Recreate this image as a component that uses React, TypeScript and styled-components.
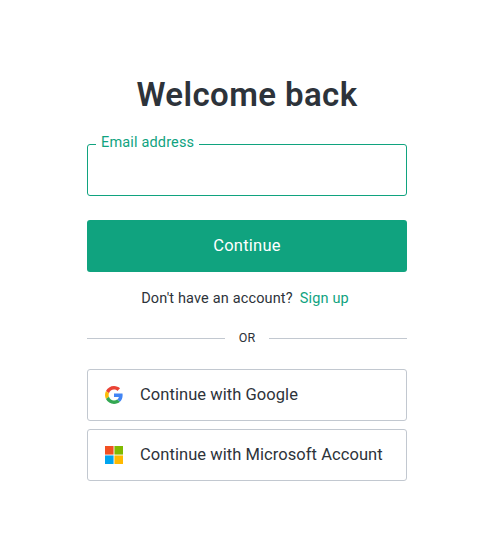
import React from "react";
import styled, { createGlobalStyle } from "styled-components";

const GlobalStyle = createGlobalStyle`
  *, *::before, *::after { box-sizing: border-box; }
  body { margin: 0; background: #fff; color: #2d333a; font-family: Roboto, "Liberation Sans", sans-serif; }
`;

const Page = styled.main`
  min-height: 555px;
  padding: 74px 79px 0 87px;
`;

const Title = styled.h1`
  margin: 0;
  font-size: 33px;
  line-height: 42px;
  font-weight: 600;
  letter-spacing: 0.4px;
  text-align: center;
  white-space: nowrap;
`;

const Field = styled.fieldset`
  height: 62px;
  margin: 18px 0 24px;
  padding: 0 8px;
  min-width: 0;
  border: 1px solid #10a37f;
  border-radius: 3px;
`;

const FieldLabel = styled.legend`
  height: 20px;
  padding: 0 4px 0 5px;
  width: 103px;
  color: #10a37f;
  font-size: 14.5px;
  line-height: 18px;
  letter-spacing: 0.16px;
  white-space: nowrap;
`;

const Input = styled.input`
  display: block;
  width: 100%;
  height: 36px;
  padding: 0 6px;
  border: 0;
  outline: 0;
  background: transparent;
  font: inherit;
`;

const PrimaryButton = styled.button`
  display: block;
  width: 100%;
  height: 52px;
  padding: 0;
  border: 0;
  border-radius: 3px;
  background: #10a37f;
  color: #fff;
  font: 400 16.5px/20px Roboto, sans-serif;
  letter-spacing: 0.25px;
`;

const SignUp = styled.p`
  margin: 16px 0 0;
  padding-right: 4px;
  font-size: 14.5px;
  line-height: 22px;
  letter-spacing: 0.15px;
  text-align: center;
  white-space: nowrap;
`;

const SignUpLink = styled.a`
  margin-left: 7px;
  color: #10a37f;
  text-decoration: none;
`;

const Divider = styled.div`
  display: grid;
  grid-template-columns: 138px 1fr 138px;
  align-items: center;
  height: 20px;
  margin: 18px 0 21px;
  font-size: 12.5px;
  line-height: 20px;
  text-align: center;

  &::before, &::after {
    content: "";
    height: 1px;
    background: #c2c8d0;
  }
`;

const Providers = styled.div`
  display: grid;
  gap: 8px;
`;

const ProviderButton = styled.button`
  display: flex;
  align-items: center;
  gap: 17px;
  height: 52px;
  padding: 0 17px;
  border: 1px solid #c2c8d0;
  border-radius: 3px;
  background: #fff;
  color: #2d333a;
  font: 400 16.5px/20px Roboto, sans-serif;
  letter-spacing: 0.06px;
  white-space: nowrap;

  svg { flex: none; }
`;

const GoogleIcon = () => (
  <svg width="18" height="18" viewBox="0 0 48 48">
    <path fill="#EA4335" d="M24 9.5c3.54 0 6.71 1.22 9.21 3.6l6.85-6.85C35.9 2.38 30.47 0 24 0 14.62 0 6.51 5.38 2.56 13.22l7.98 6.19C12.43 13.72 17.74 9.5 24 9.5z" />
    <path fill="#4285F4" d="M46.98 24.55c0-1.57-.15-3.09-.38-4.55H24v9.02h12.94c-.58 2.96-2.26 5.48-4.78 7.18l7.73 6c4.51-4.18 7.09-10.36 7.09-17.65z" />
    <path fill="#FBBC05" d="M10.53 28.59c-.48-1.45-.76-2.99-.76-4.59s.27-3.14.76-4.59l-7.98-6.19C.92 16.46 0 20.12 0 24c0 3.88.92 7.54 2.56 10.78l7.97-6.19z" />
    <path fill="#34A853" d="M24 48c6.48 0 11.93-2.13 15.89-5.81l-7.73-6c-2.15 1.45-4.92 2.3-8.16 2.3-6.26 0-11.57-4.22-13.47-9.91l-7.98 6.19C6.51 42.62 14.62 48 24 48z" />
  </svg>
);

const MicrosoftIcon = () => (
  <svg width="18" height="18" viewBox="0 0 21 21">
    <rect width="10" height="10" fill="#f25022" />
    <rect x="11" width="10" height="10" fill="#7fba00" />
    <rect y="11" width="10" height="10" fill="#00a4ef" />
    <rect x="11" y="11" width="10" height="10" fill="#ffb900" />
  </svg>
);

export default function App() {
  return (
    <>
      <GlobalStyle />
      <Page>
        <Title>Welcome back</Title>
        <Field>
          <FieldLabel>Email address</FieldLabel>
          <Input type="email" aria-label="Email address" />
        </Field>
        <PrimaryButton>Continue</PrimaryButton>
        <SignUp>
          Don't have an account?<SignUpLink>Sign up</SignUpLink>
        </SignUp>
        <Divider>OR</Divider>
        <Providers>
          <ProviderButton>
            <GoogleIcon />
            <span>Continue with Google</span>
          </ProviderButton>
          <ProviderButton>
            <MicrosoftIcon />
            <span>Continue with Microsoft Account</span>
          </ProviderButton>
        </Providers>
      </Page>
    </>
  );
}
